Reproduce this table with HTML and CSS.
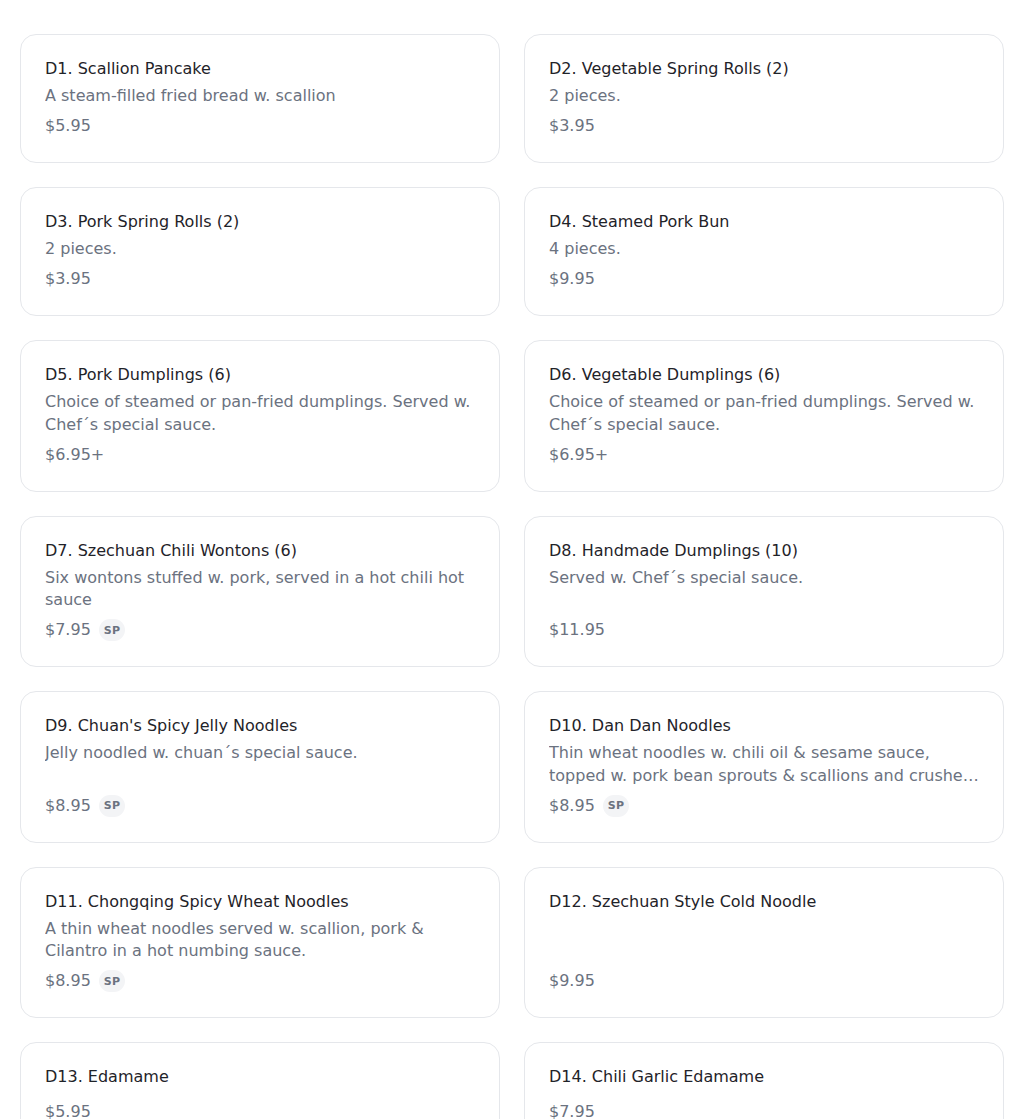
FILE: index.html
```html
<!DOCTYPE html>
<html lang="en">
<head>
<meta charset="utf-8">
<title>Menu</title>
<link rel="stylesheet" href="styles.css">
</head>
<body>
<main class="menu">
  <div class="grid">
    <article class="card">
      <h3 class="title">D1. Scallion Pancake</h3>
      <p class="desc">A steam-filled fried bread w. scallion</p>
      <div class="price-row"><span class="price">$5.95</span></div>
    </article>
    <article class="card">
      <h3 class="title">D2. Vegetable Spring Rolls (2)</h3>
      <p class="desc">2 pieces.</p>
      <div class="price-row"><span class="price">$3.95</span></div>
    </article>
    <article class="card">
      <h3 class="title">D3. Pork Spring Rolls (2)</h3>
      <p class="desc">2 pieces.</p>
      <div class="price-row"><span class="price">$3.95</span></div>
    </article>
    <article class="card">
      <h3 class="title">D4. Steamed Pork Bun</h3>
      <p class="desc">4 pieces.</p>
      <div class="price-row"><span class="price">$9.95</span></div>
    </article>
    <article class="card">
      <h3 class="title">D5. Pork Dumplings (6)</h3>
      <p class="desc">Choice of steamed or pan-fried dumplings. Served w. Chef´s special sauce.</p>
      <div class="price-row"><span class="price">$6.95+</span></div>
    </article>
    <article class="card">
      <h3 class="title">D6. Vegetable Dumplings (6)</h3>
      <p class="desc">Choice of steamed or pan-fried dumplings. Served w. Chef´s special sauce.</p>
      <div class="price-row"><span class="price">$6.95+</span></div>
    </article>
    <article class="card">
      <h3 class="title">D7. Szechuan Chili Wontons (6)</h3>
      <p class="desc">Six wontons stuffed w. pork, served in a hot chili hot sauce</p>
      <div class="price-row"><span class="price">$7.95</span><span class="badge">SP</span></div>
    </article>
    <article class="card">
      <h3 class="title">D8. Handmade Dumplings (10)</h3>
      <p class="desc">Served w. Chef´s special sauce.</p>
      <div class="price-row"><span class="price">$11.95</span></div>
    </article>
    <article class="card">
      <h3 class="title">D9. Chuan's Spicy Jelly Noodles</h3>
      <p class="desc">Jelly noodled w. chuan´s special sauce.</p>
      <div class="price-row"><span class="price">$8.95</span><span class="badge">SP</span></div>
    </article>
    <article class="card">
      <h3 class="title">D10. Dan Dan Noodles</h3>
      <p class="desc">Thin wheat noodles w. chili oil &amp; sesame sauce, topped w. pork bean sprouts &amp; scallions and crushed peanuts.</p>
      <div class="price-row"><span class="price">$8.95</span><span class="badge">SP</span></div>
    </article>
    <article class="card">
      <h3 class="title">D11. Chongqing Spicy Wheat Noodles</h3>
      <p class="desc">A thin wheat noodles served w. scallion, pork &amp; Cilantro in a hot numbing sauce.</p>
      <div class="price-row"><span class="price">$8.95</span><span class="badge">SP</span></div>
    </article>
    <article class="card">
      <h3 class="title">D12. Szechuan Style Cold Noodle</h3>
      <p class="desc"></p>
      <div class="price-row"><span class="price">$9.95</span></div>
    </article>
    <article class="card">
      <h3 class="title">D13. Edamame</h3>
      <p class="desc"></p>
      <div class="price-row"><span class="price">$5.95</span></div>
    </article>
    <article class="card">
      <h3 class="title">D14. Chili Garlic Edamame</h3>
      <p class="desc"></p>
      <div class="price-row"><span class="price">$7.95</span></div>
    </article>
  </div>
</main>
</body>
</html>
```
FILE: styles.css
```css
html, body {
  margin: 0;
  padding: 0;
  background: #ffffff;
}

body {
  font-family: "DejaVu Sans", "Liberation Sans", sans-serif;
  color: #1f2937;
}

.menu {
  padding: 34px 20px 40px;
}

.grid {
  display: grid;
  grid-template-columns: 1fr 1fr;
  gap: 24px;
}

.card {
  display: flex;
  flex-direction: column;
  border: 1px solid #e5e7eb;
  border-radius: 16px;
  padding: 24px;
  background: #fff;
}

.title {
  margin: 0;
  font-size: 16px;
  font-weight: 400;
  line-height: 20px;
  color: #1f2329;
}

.desc {
  margin: 6px 0 0;
  font-size: 16px;
  line-height: 22.5px;
  color: #6b7280;
  display: -webkit-box;
  -webkit-line-clamp: 2;
  -webkit-box-orient: vertical;
  overflow: hidden;
}

.price-row {
  margin-top: auto;
  padding-top: 6.5px;
  display: flex;
  align-items: center;
  gap: 8px;
  height: 24px;
}

.price {
  font-size: 16px;
  line-height: 20px;
  color: #6b7280;
}

.badge {
  display: inline-flex;
  align-items: center;
  height: 22px;
  padding: 0 5px;
  border-radius: 11px;
  background: #f3f4f6;
  color: #6b7280;
  font-size: 11px;
  font-weight: 700;
  letter-spacing: 0.3px;
}
```
